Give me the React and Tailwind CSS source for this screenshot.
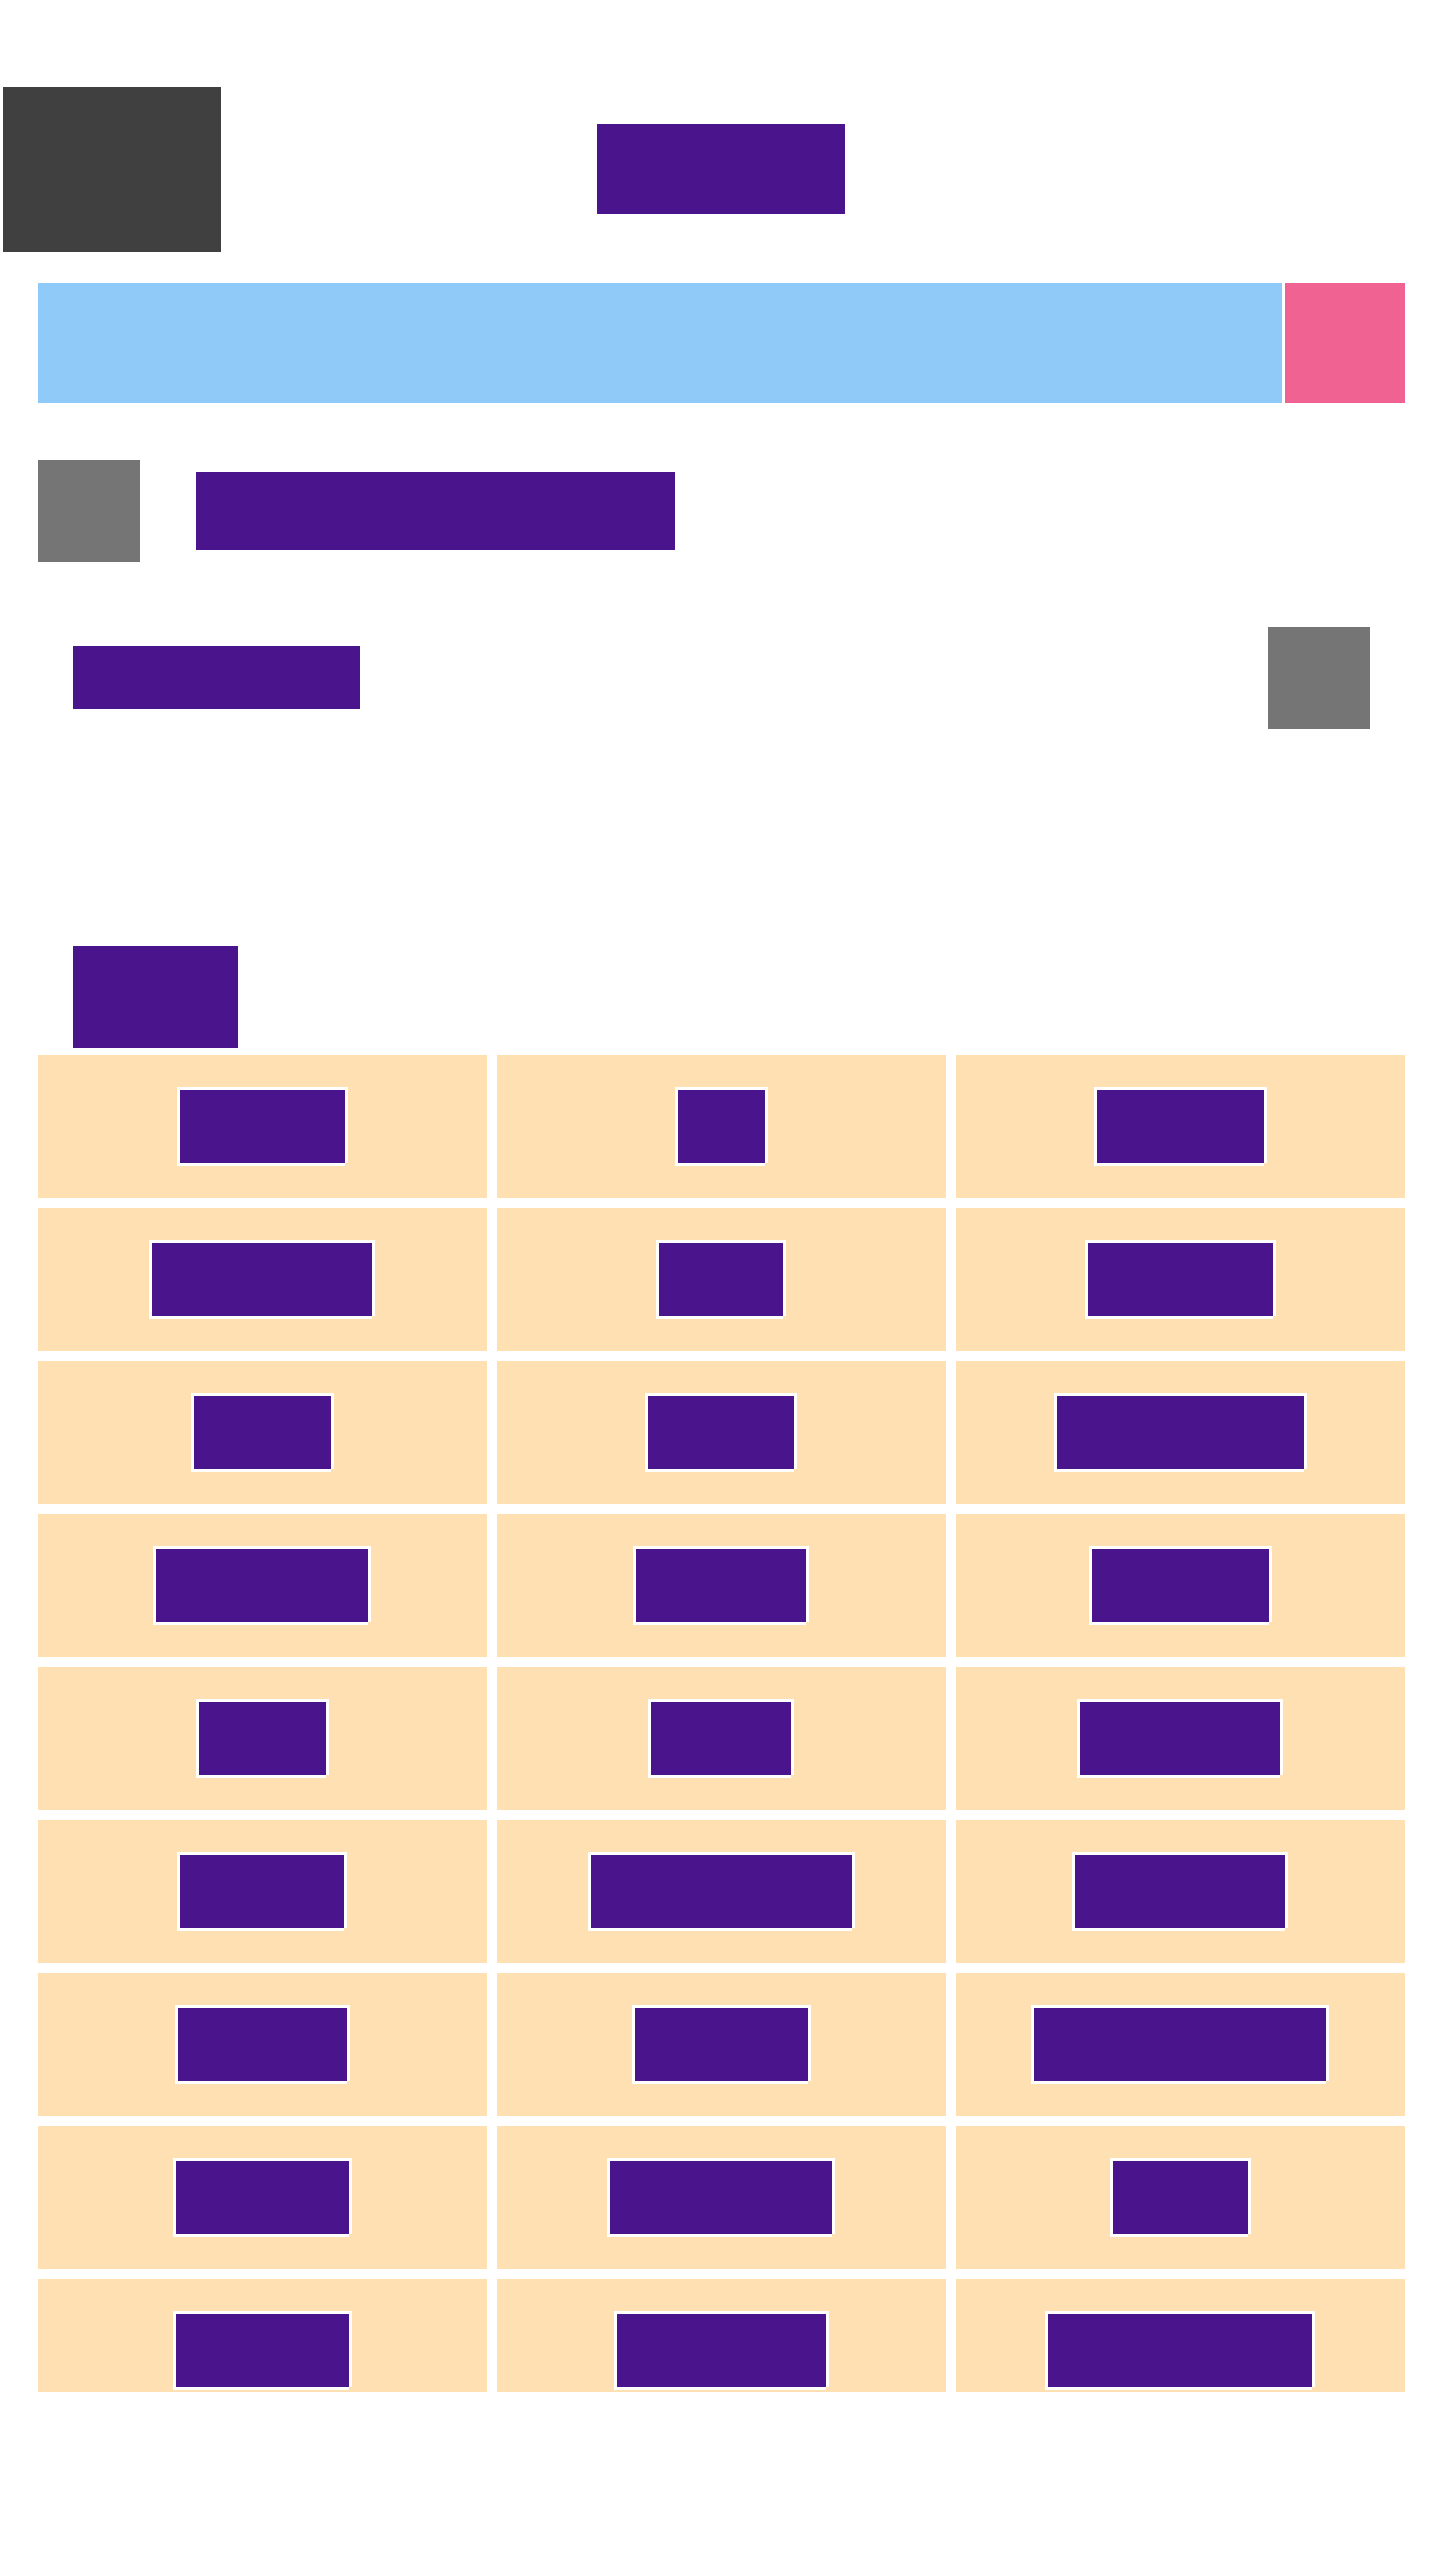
const rows = [
  [165, 87, 167],
  [220, 124, 185],
  [137, 146, 247],
  [212, 170, 177],
  [127, 140, 200],
  [164, 261, 210],
  [169, 173, 292],
  [173, 222, 135],
  [173, 209, 264],
];

function Cell({ width, last }) {
  return (
    <div className={`flex justify-center bg-[#ffe0b2] pt-[35px] ${last ? "h-[113px]" : "h-[143px]"}`}>
      <div
        className={`h-[73px] bg-[#4a148c] shadow-[-3px_0_0_#fff,3px_0_0_#fff,0_-3px_0_#fff,0_3px_0_#fff,-3px_-3px_0_#fff,3px_-3px_0_#fff,-3px_3px_0_#fff] ${width % 2 === 0 ? "mr-px" : ""}`}
        style={{ width }}
      />
    </div>
  );
}

export default function App() {
  return (
    <div className="h-[2560px] w-[1440px] bg-white">
      <div className="flex items-start pt-[87px] pl-[3px]">
        <div className="h-[165px] w-[218px] bg-[#404040]" />
        <div className="mt-[37px] ml-[376px] h-[90px] w-[248px] bg-[#4a148c]" />
      </div>

      <div className="mt-[31px] ml-[38px] flex h-[120px] w-[1367px] gap-[3px]">
        <div className="flex-1 bg-[#90caf9]" />
        <div className="w-[120px] bg-[#f06292]" />
      </div>

      <div className="mt-[57px] ml-[38px] flex items-center">
        <div className="h-[102px] w-[102px] bg-[#757575]" />
        <div className="ml-[56px] h-[78px] w-[479px] bg-[#4a148c]" />
      </div>

      <div className="mt-[65px] flex items-start justify-between pr-[70px] pl-[73px]">
        <div className="mt-[19px] h-[63px] w-[287px] bg-[#4a148c]" />
        <div className="h-[102px] w-[102px] bg-[#757575]" />
      </div>

      <div className="mt-[217px] ml-[73px] h-[102px] w-[165px] bg-[#4a148c]" />

      <div className="mt-[7px] ml-[38px] grid w-[1367px] grid-cols-3 gap-[10px]">
        {rows.flatMap((row, r) =>
          row.map((width, c) => <Cell key={`${r}-${c}`} width={width} last={r === rows.length - 1} />)
        )}
      </div>
    </div>
  );
}
